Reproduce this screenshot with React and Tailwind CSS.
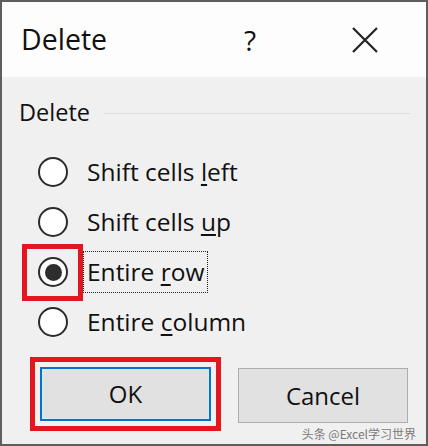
const font = { fontFamily: '"Open Sans", "Noto Sans", sans-serif' }

const options = [
  { label: 'Shift cells ', key: 'l', rest: 'eft' },
  { label: 'Shift cells ', key: 'u', rest: 'p' },
  { label: 'Entire ', key: 'r', rest: 'ow', checked: true },
  { label: 'Entire ', key: 'c', rest: 'olumn' },
]

function Radio({ checked }) {
  return (
    <span className="flex h-[30px] w-[30px] shrink-0 items-center justify-center rounded-full border-2 border-[#2b2b2b] bg-white">
      {checked && <span className="h-[17px] w-[17px] rounded-full bg-[#2e2e2e]" />}
    </span>
  )
}

export default function App() {
  return (
    <div
      className="flex h-[446px] w-[428px] flex-col overflow-hidden border-2 border-[#5e5e5e] bg-[#f0f0f0] text-[#111]"
      style={font}
    >
      <div className="flex h-[75px] shrink-0 items-center bg-[#fdfdfd] pl-[19px] pr-[48px]">
        <span className="text-[28.5px] leading-none">Delete</span>
        <span className="ml-auto mr-[96px] text-[28px] leading-none">?</span>
        <svg width="26" height="26" viewBox="0 0 26 26" className="stroke-[#222]">
          <path d="M1 1 L25 25 M25 1 L1 25" strokeWidth="2.2" fill="none" />
        </svg>
      </div>

      <div className="flex flex-1 flex-col">
        <div className="mt-[21px] flex h-[30px] items-center pl-[17px] pr-[16px]">
          <span className="text-[23.5px] leading-none">Delete</span>
          <span className="ml-[14px] h-px flex-1 bg-[#dcdcdc]" />
        </div>

        <div className="mt-[19px] flex flex-col pl-[36px]">
          {options.map((o) => (
            <div key={o.rest} className="flex h-[50px] items-center">
              <span className="relative flex">
                <Radio checked={o.checked} />
                {o.checked && (
                  <span className="absolute left-[-16px] top-[-13px] h-[57px] w-[61px] border-[5px] border-[#e3161f]" />
                )}
              </span>
              <span
                className={`text-[24.5px] leading-none ${
                  o.checked ? 'ml-[15px] border border-dotted border-[#222] px-[3px] py-[8px]' : 'ml-[19px]'
                }`}
              >
                {o.label}
                <span className="underline underline-offset-[3px]">{o.key}</span>
                {o.rest}
              </span>
            </div>
          ))}
        </div>

        <div className="mt-[10px] flex items-start pl-[28px]">
          <div className="border-[5px] border-[#e3161f] p-[5px]">
            <button className="flex h-[54px] w-[171px] items-center justify-center border-2 border-[#0a6fd0] bg-[#e1e1e1] text-[24px] shadow-[inset_0_0_0_1px_#c8f0ff]">
              OK
            </button>
          </div>
          <div className="ml-[17px] flex flex-col items-end">
            <button className="mt-[11px] flex h-[55px] w-[170px] items-center justify-center border border-[#adadad] bg-[#e1e1e1] text-[24px]">
              Cancel
            </button>
            <span
              className="mt-[5px] mr-[-8px] text-[12px] leading-none text-[#7a7a7a]"
              style={{ fontFamily: '"Noto Sans CJK SC", sans-serif' }}
            >
              头条 @Excel学习世界
            </span>
          </div>
        </div>
      </div>
    </div>
  )
}
